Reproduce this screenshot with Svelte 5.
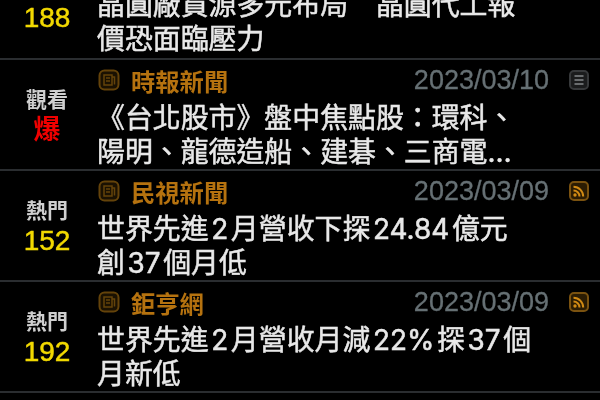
<script>
  const rows = [
    { label: "", count: "188", source: "", date: "", kind: "", lines: ["晶圓廠貨源多元布局　晶圓代工報", "價恐面臨壓力"], cut: true },
    { label: "觀看", hot: "爆", source: "時報新聞", date: "2023/03/10", kind: "doc", lines: ["《台北股市》盤中焦點股：環科、", "陽明、龍德造船、建碁、三商電…"] },
    { label: "熱門", count: "152", source: "民視新聞", date: "2023/03/09", kind: "rss", lines: ["世界先進 2 月營收下探 24.84 億元", "創 37 個月低"] },
    { label: "熱門", count: "192", source: "鉅亨網", date: "2023/03/09", kind: "rss", lines: ["世界先進 2 月營收月減 22% 探 37 個", "月新低"] }
  ];
</script>

<div class="screen">
  <div class="list">
    {#each rows as row}
      <article class="row" class:cut={row.cut}>
        <div class="stat">
          {#if row.label}<span class="label">{row.label}</span>{/if}
          {#if row.hot}<span class="hot">{row.hot}</span>{/if}
          {#if row.count}<span class="count">{row.count}</span>{/if}
        </div>
        <div class="main">
          {#if row.source}
            <div class="meta">
              <svg class="paper" viewBox="0 0 22 22" width="22" height="22">
                <rect x="1.5" y="1.5" width="19" height="19" rx="5" fill="#1a1102" stroke="#64430a" stroke-width="2" />
                <path d="M6 6h8v10H6zM8 9h4M8 12h4M14 8h2.5v7.5" fill="none" stroke="#64430a" stroke-width="1.5" />
              </svg>
              <span class="source">{row.source}</span>
              <span class="date">{row.date}</span>
              {#if row.kind === "doc"}
                <svg class="kind" viewBox="0 0 20 20" width="20" height="20">
                  <rect x="1" y="1" width="18" height="18" rx="4" fill="#1b1c1d" stroke="#37393b" stroke-width="2" />
                  <path d="M5.5 6h9M5.5 10h9M5.5 14h9" stroke="#85888a" stroke-width="1.6" />
                </svg>
              {:else}
                <svg class="kind" viewBox="0 0 20 20" width="20" height="20">
                  <rect x="1" y="1" width="18" height="18" rx="4" fill="#2b1c03" stroke="#7a5210" stroke-width="2" />
                  <circle cx="6" cy="14" r="1.7" fill="#d18a14" />
                  <path d="M4.5 9.5a6 6 0 0 1 6 6M4.5 5.8a9.7 9.7 0 0 1 9.7 9.7" fill="none" stroke="#d18a14" stroke-width="2" />
                </svg>
              {/if}
            </div>
          {/if}
          <p class="title">
            {#each row.lines as line}<span>{line}</span>{/each}
          </p>
        </div>
      </article>
    {/each}
  </div>
</div>

<style>
  :global(body) {
    margin: 0;
    background: #000;
  }

  .screen {
    width: 600px;
    height: 400px;
    overflow: hidden;
    background: #000;
    font-family: Inter, "Noto Sans CJK TC", sans-serif;
    filter: blur(0.45px);
  }

  .row {
    display: flex;
    height: 109px;
    border-bottom: 2.4px solid #2a2d30;
    box-sizing: content-box;
  }

  .row.cut {
    height: 58px;
    align-items: flex-start;
    overflow: hidden;
  }

  .stat {
    flex: none;
    width: 94px;
    padding-top: 3px;
    display: flex;
    flex-direction: column;
    align-items: center;
    justify-content: center;
  }

  .row.cut .stat {
    height: 29px;
  }

  .label {
    font-size: 21px;
    line-height: 28px;
    font-weight: 700;
    color: #cfcfcf;
  }

  .hot {
    font-size: 27px;
    line-height: 32px;
    font-weight: 700;
    color: #f00000;
  }

  .count {
    font-family: "Liberation Sans", sans-serif;
    font-size: 28px;
    line-height: 32px;
    -webkit-text-stroke: 0.5px #f2d900;
    color: #f2d900;
  }

  .main {
    flex: 1;
    min-width: 0;
    padding: 8px 11px 0 3px;
  }

  .row.cut .main {
    padding-top: 0;
    margin-top: -11px;
  }

  .meta {
    display: flex;
    align-items: center;
    height: 24px;
    margin-bottom: 10px;
  }

  .paper {
    flex: none;
    margin-left: 1px;
  }

  .source {
    margin-left: 11px;
    font-size: 24.3px;
    font-weight: 700;
    color: #b5720f;
  }

  .date {
    margin-left: auto;
    font-family: "Liberation Sans", sans-serif;
    font-size: 27px;
    color: #667074;
    -webkit-text-stroke: 0.3px #667074;
  }

  .kind {
    flex: none;
    margin-left: 20px;
  }

  .title {
    margin: 0;
    font-size: 27.9px;
    line-height: 33.5px;
    font-weight: 400;
    -webkit-text-stroke: 0.5px #e8e8e8;
    word-spacing: -5.2px;
    color: #e8e8e8;
  }

  .title span {
    display: block;
    white-space: nowrap;
  }
</style>
